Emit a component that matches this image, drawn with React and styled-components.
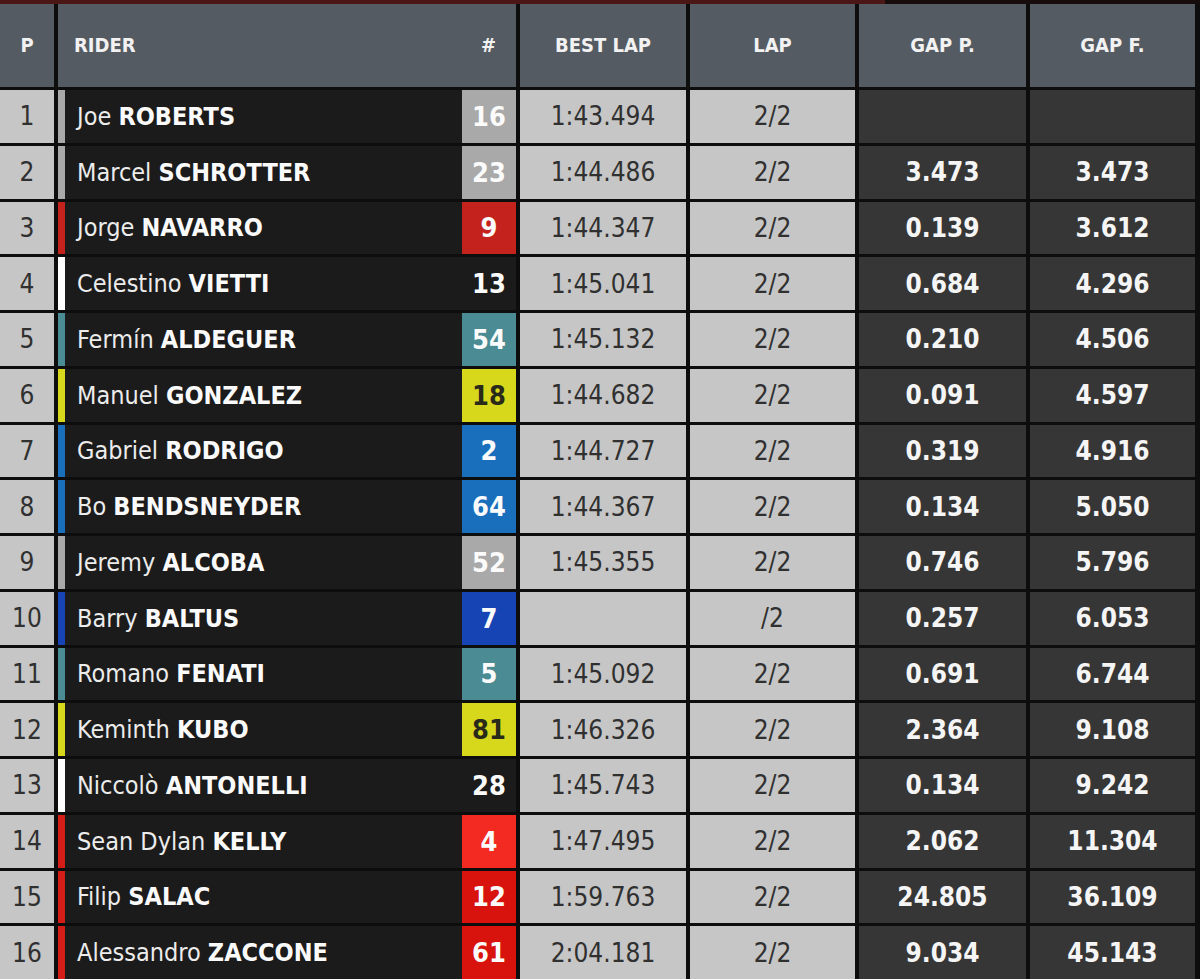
import React from 'react';
import styled, { createGlobalStyle } from 'styled-components';

const riders = [
  { pos: 1, first: 'Joe', last: 'ROBERTS', num: 16, team: '#a9a9a9', best: '1:43.494', lap: '2/2', gapP: '', gapF: '' },
  { pos: 2, first: 'Marcel', last: 'SCHROTTER', num: 23, team: '#a9a9a9', best: '1:44.486', lap: '2/2', gapP: '3.473', gapF: '3.473' },
  { pos: 3, first: 'Jorge', last: 'NAVARRO', num: 9, team: '#c4221c', best: '1:44.347', lap: '2/2', gapP: '0.139', gapF: '3.612' },
  { pos: 4, first: 'Celestino', last: 'VIETTI', num: 13, team: '#ffffff', numBg: '#1b1b1b', best: '1:45.041', lap: '2/2', gapP: '0.684', gapF: '4.296' },
  { pos: 5, first: 'Fermín', last: 'ALDEGUER', num: 54, team: '#4b8b93', best: '1:45.132', lap: '2/2', gapP: '0.210', gapF: '4.506' },
  { pos: 6, first: 'Manuel', last: 'GONZALEZ', num: 18, team: '#d7d81c', dark: true, best: '1:44.682', lap: '2/2', gapP: '0.091', gapF: '4.597' },
  { pos: 7, first: 'Gabriel', last: 'RODRIGO', num: 2, team: '#1a6fbd', best: '1:44.727', lap: '2/2', gapP: '0.319', gapF: '4.916' },
  { pos: 8, first: 'Bo', last: 'BENDSNEYDER', num: 64, team: '#1a6fbd', best: '1:44.367', lap: '2/2', gapP: '0.134', gapF: '5.050' },
  { pos: 9, first: 'Jeremy', last: 'ALCOBA', num: 52, team: '#a9a9a9', best: '1:45.355', lap: '2/2', gapP: '0.746', gapF: '5.796' },
  { pos: 10, first: 'Barry', last: 'BALTUS', num: 7, team: '#1744b5', best: '', lap: '/2', gapP: '0.257', gapF: '6.053' },
  { pos: 11, first: 'Romano', last: 'FENATI', num: 5, team: '#4b8b93', best: '1:45.092', lap: '2/2', gapP: '0.691', gapF: '6.744' },
  { pos: 12, first: 'Keminth', last: 'KUBO', num: 81, team: '#d7d81c', dark: true, best: '1:46.326', lap: '2/2', gapP: '2.364', gapF: '9.108' },
  { pos: 13, first: 'Niccolò', last: 'ANTONELLI', num: 28, team: '#ffffff', numBg: '#1b1b1b', best: '1:45.743', lap: '2/2', gapP: '0.134', gapF: '9.242' },
  { pos: 14, first: 'Sean Dylan', last: 'KELLY', num: 4, team: '#d51d17', numBg: '#f22a22', best: '1:47.495', lap: '2/2', gapP: '2.062', gapF: '11.304' },
  { pos: 15, first: 'Filip', last: 'SALAC', num: 12, team: '#d51d17', numBg: '#d8130e', best: '1:59.763', lap: '2/2', gapP: '24.805', gapF: '36.109' },
  { pos: 16, first: 'Alessandro', last: 'ZACCONE', num: 61, team: '#d51d17', numBg: '#d8130e', best: '2:04.181', lap: '2/2', gapP: '9.034', gapF: '45.143' },
];

const GlobalStyle = createGlobalStyle`
  body {
    margin: 0;
    background: #0d0d0d;
    font-family: "DejaVu Sans Condensed", "Liberation Sans", sans-serif;
  }
`;

const Page = styled.div`
  width: 1200px;
  height: 979px;
  overflow: hidden;
  background: #0d0d0d;
`;

const TopBar = styled.div`
  height: 4px;
  background: linear-gradient(to right, #4a1616 0, #4a1616 885px, #160c0c 885px);
`;

const Table = styled.div`
  display: grid;
  grid-template-columns: 54px 458px 166px 165px 167px 165px;
  grid-template-rows: 83px;
  grid-auto-rows: 52.75px;
  column-gap: 4px;
  row-gap: 3px;
  width: 1195px;
`;

const HeadCell = styled.div`
  background: #555b62;
  color: #f2f2f2;
  font-weight: 700;
  font-size: 20px;
  display: flex;
  align-items: center;
  justify-content: ${p => (p.left ? 'space-between' : 'center')};
  padding: ${p => (p.left ? '0 20px 0 16px' : '0')};
  padding-bottom: 2px;
`;

const Cell = styled.div`
  background: ${p => (p.dark ? '#363636' : '#c6c6c6')};
  color: ${p => (p.dark ? '#f5f5f5' : '#303030')};
  font-weight: ${p => (p.dark ? 700 : 400)};
  font-size: 26px;
  display: flex;
  align-items: center;
  justify-content: center;
`;

const RiderCell = styled.div`
  display: flex;
  background: #1b1b1b;
`;

const Stripe = styled.div`
  width: 7px;
  background: ${p => p.color};
`;

const Name = styled.div`
  flex: 1;
  display: flex;
  align-items: center;
  padding-left: 12px;
  color: #ececec;
  font-size: 25px;
  white-space: pre;

  b {
    font-weight: 700;
    color: #fafafa;
  }
`;

const Number = styled.div`
  width: 54px;
  display: flex;
  align-items: center;
  justify-content: center;
  background: ${p => p.bg};
  color: ${p => (p.dark ? '#2a2a1a' : '#fbfbfb')};
  font-weight: 700;
  font-size: 27px;
`;

export default function App() {
  return (
    <>
      <GlobalStyle />
      <Page>
        <TopBar />
        <Table>
          <HeadCell>P</HeadCell>
          <HeadCell left>
            <span>RIDER</span>
            <span>#</span>
          </HeadCell>
          <HeadCell>BEST LAP</HeadCell>
          <HeadCell>LAP</HeadCell>
          <HeadCell>GAP P.</HeadCell>
          <HeadCell>GAP F.</HeadCell>
          {riders.map(r => (
            <React.Fragment key={r.pos}>
              <Cell>{r.pos}</Cell>
              <RiderCell>
                <Stripe color={r.team} />
                <Name>
                  {r.first} <b>{r.last}</b>
                </Name>
                <Number bg={r.numBg || r.team} dark={r.dark}>{r.num}</Number>
              </RiderCell>
              <Cell>{r.best}</Cell>
              <Cell>{r.lap}</Cell>
              <Cell dark>{r.gapP}</Cell>
              <Cell dark>{r.gapF}</Cell>
            </React.Fragment>
          ))}
        </Table>
      </Page>
    </>
  );
}
